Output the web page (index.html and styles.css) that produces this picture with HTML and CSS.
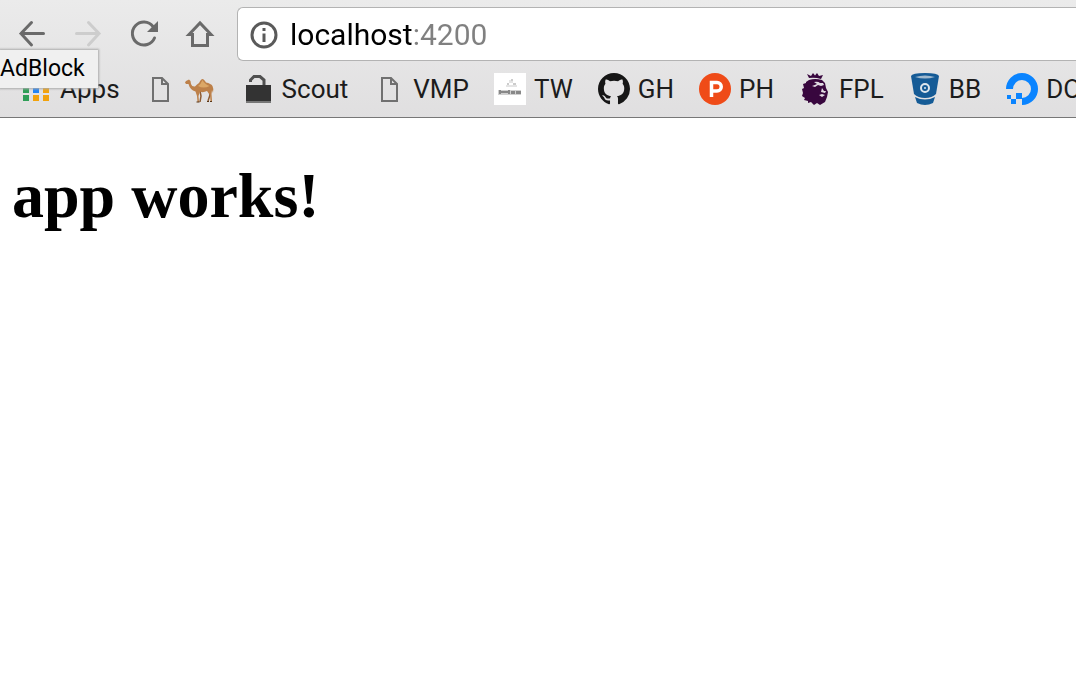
FILE: index.html
```html
<!DOCTYPE html>
<html lang="en">
<head>
<meta charset="utf-8">
<title>localhost:4200</title>
<link rel="stylesheet" href="styles.css">
</head>
<body>
<header class="chrome">
  <div class="toolbar">
    <nav class="controls" aria-label="Navigation">
      <button class="control" type="button" aria-label="Back">
        <svg class="glyph" viewBox="0 0 32 32"><path d="M27.500 15.500H5M15.500 4.500 5 15.500 15.500 27" fill="none" stroke="#6a6a6a" stroke-width="3" stroke-linecap="round"/></svg>
      </button>
      <button class="control" type="button" aria-label="Forward" disabled>
        <svg class="glyph" viewBox="0 0 32 32"><path d="M4.500 15.500H27M16.500 4.500 27 15.500 16.500 27" fill="none" stroke="#cdcdcd" stroke-width="3" stroke-linecap="round"/></svg>
      </button>
      <button class="control" type="button" aria-label="Reload">
        <svg class="glyph" viewBox="0 0 32 32"><path d="M25 8.500A11.500 11.500 0 1 0 26.500 20" fill="none" stroke="#6a6a6a" stroke-width="3" stroke-linecap="round"/><path d="M30 3v11H19z" fill="#6a6a6a"/></svg>
      </button>
      <button class="control" type="button" aria-label="Home">
        <svg class="glyph" viewBox="0 0 32 32"><path d="M5 16.500 16 5l11 11.500h-3.500v11h-15v-11z" fill="none" stroke="#6a6a6a" stroke-width="3"/></svg>
      </button>
    </nav>
    <div class="address">
      <svg class="info" viewBox="0 0 28 28"><circle cx="14" cy="14" r="12" fill="none" stroke="#5a5a5a" stroke-width="3"/><path d="M12.500 7h3v3h-3zM12.500 12.500h3V21h-3z" fill="#5a5a5a"/></svg>
      <input class="url" type="text" value="localhost:4200" aria-label="Address" spellcheck="false">
    </div>
  </div>
  <nav class="bookmarks" aria-label="Bookmarks">
    <a class="bookmark" href="#apps">
      <svg class="icon" viewBox="0 0 32 32"><path d="M3 14h6v6H3zM3 22h6v6H3z" fill="#2f9e57"/><path d="M13 14h6v6h-6z" fill="#2383f3"/><path d="M23 14h6v6h-6zM13 22h6v6h-6zM23 22h6v6h-6z" fill="#f2a20c"/></svg>
      <span>Apps</span>
    </a>
    <a class="bookmark" href="#camel" aria-label="Camel">
      <svg class="icon" viewBox="0 0 32 32"><path d="M8 5h9l6 6v17H8zM17 5v6h6" fill="none" stroke="#707070" stroke-width="2"/></svg>
      <svg class="icon" viewBox="0 0 32 32">
        <path d="M15 18l1 5-1 6M24 17l1 5-2 6" fill="none" stroke="#8f5b31" stroke-width="1.500"/>
        <path d="M0 9.500 1 8l3-1.500L5.500 8 6 11q1 3 4 2.500Q12 11 14 10q2-4 3.500-4T21 9.500q5 1 6.500 3.500 1.500 3 .5 7l-1-3-.5 4 .5 7h-1.500L25 22l-3-4q-4 2-7 .5L13.500 23l.5 6h-1.500L12 23l-1.500-4.500Q5 17 3.500 11L1 11Z" fill="#bd8049"/>
        <path d="M13 13q3-2 4.500-6 2 4 7 6-6 3-11.500 0z" fill="#dba767"/>
        <path d="M11.500 28.500h3v1h-3zM22 28h2v1h-2zM25 28h2v1h-2z" fill="#593718"/>
      </svg>
    </a>
    <a class="bookmark" href="#scout">
      <svg class="icon" viewBox="0 0 32 32"><path d="M8.500 9V7L12 3.500h6L22 7v6" fill="none" stroke="#505050" stroke-width="3"/><path d="M4 12h25v16H4z" fill="#333"/><path d="M4 28h25v2H4z" fill="#777"/></svg>
      <span>Scout</span>
    </a>
    <a class="bookmark" href="#vmp">
      <svg class="icon" viewBox="0 0 32 32"><path d="M9 5h9l6 6v17H9zM18 5v6h6" fill="none" stroke="#707070" stroke-width="2"/></svg>
      <span>VMP</span>
    </a>
    <a class="bookmark" href="#tw">
      <svg class="icon" viewBox="0 0 32 32"><path d="M0 0h32v32H0z" fill="#fff"/><path d="M15 7h4v3h-4zM12 12h11v2H12z" fill="#e4e4e4"/><path d="M17 6h2v2h-2zM19 10h3v2h-3zM13 10h2v2h-2z" fill="#ccc"/><path d="M4 17h23v5H4z" fill="#d0d0d0"/><path d="M5 17h2v4H5zM7 18h7v2H7zM14 17h2v4h-2zM17 18h4v3h-4zM22 18h5v3h-5z" fill="#888"/></svg>
      <span>TW</span>
    </a>
    <a class="bookmark" href="#gh">
      <svg class="icon" viewBox="0 0 16 16"><path fill="#161616" d="M8 0C3.580 0 0 3.580 0 8c0 3.540 2.290 6.530 5.470 7.590.4.070.55-.17.55-.38 0-.19-.01-.82-.01-1.490-2.010.37-2.530-.49-2.690-.94-.09-.23-.48-.94-.82-1.130-.28-.15-.68-.52-.01-.53.63-.01 1.080.58 1.230.82.72 1.210 1.870.87 2.330.66.07-.52.28-.87.51-1.070-1.780-.2-3.640-.89-3.640-3.950 0-.87.31-1.590.82-2.150-.08-.2-.36-1.020.08-2.120 0 0 .67-.21 2.200.82.64-.18 1.320-.27 2-.27s1.360.09 2 .27c1.530-1.040 2.200-.82 2.200-.82.44 1.100.16 1.920.08 2.120.51.56.82 1.270.82 2.150 0 3.070-1.870 3.750-3.650 3.950.29.25.54.73.54 1.480 0 1.070-.01 1.930-.01 2.200 0 .21.15.46.55.38A8.010 8.010 0 0 0 16 8c0-4.420-3.580-8-8-8z"/></svg>
      <span>GH</span>
    </a>
    <a class="bookmark" href="#ph">
      <svg class="icon" viewBox="0 0 32 32"><circle cx="16" cy="16" r="16" fill="#ef4b18"/><path d="M12.500 24V9.500H18a4 4 0 0 1 0 8.500h-5" fill="none" stroke="#fff" stroke-width="3.500"/></svg>
      <span>PH</span>
    </a>
    <a class="bookmark" href="#fpl">
      <svg class="icon" viewBox="0 0 32 32"><path d="M10 5 8 1l4 2 2-3 2 2.500L18 0l2 3 4-1-2 4q-6-2-12-1z" fill="#38073e"/><path d="M10 7q6-2 13 0l3 3 1 5 2 4-1 5-2 5-5 3-3-2-3 2-3-3-3 1v-2l-4-1 1-2-3-2 1-3-1-4 2-1-1-4 3-1V9z" fill="#38073e"/><path d="M15 9q4-1 6 1l3 0 1 2-3 1-3-1-3 2-3-1q3-1 5-2zM23 15l2 3 2 0-1 2-4-1zM20 22l3-1 3 1-3 2z" fill="#e1dce3"/></svg>
      <span>FPL</span>
    </a>
    <a class="bookmark" href="#bb">
      <svg class="icon" viewBox="0 0 32 32"><path d="M2 3Q3 0 16 0t14 3l-3 18q-4 4-11 4T5 21z" fill="#155b96"/><path d="M6 4q10-3 20 0-10 3-20 0z" fill="#9fb9cf"/><path d="M6 24q10 5 20 0l-2 6q-8 4-16 0z" fill="#155b96"/><circle cx="16" cy="15" r="4" fill="none" stroke="#dde6ed" stroke-width="2"/><circle cx="16" cy="15" r="1" fill="#dde6ed"/></svg>
      <span>BB</span>
    </a>
    <a class="bookmark" href="#do">
      <svg class="icon" viewBox="0 0 32 32"><path d="M3.500 16A12.500 12.500 0 1 1 16 28.500" fill="none" stroke="#0a84ff" stroke-width="7"/><path d="M10 20h6v6h-6zM5 26h5v5H5zM1 22h4v4H1z" fill="#0a84ff"/></svg>
      <span>DO</span>
    </a>
  </nav>
  <div class="tooltip" role="tooltip">AdBlock</div>
</header>
<main class="page">
  <h1 class="title">app works!</h1>
</main>
</body>
</html>
```
FILE: styles.css
```css
* {
  box-sizing: border-box;
}

body {
  margin: 0;
  background: #fff;
  color: #000;
  font-family: "Liberation Serif", serif;
}

.chrome {
  position: relative;
  overflow: hidden;
  padding-top: 7px;
  border-bottom: 1px solid #777;
  background: linear-gradient(#ebebeb, #e0dfe0);
  font-family: Roboto, sans-serif;
}

.toolbar {
  display: flex;
  align-items: center;
  gap: 9px;
  padding-left: 4px;
}

.controls {
  display: flex;
}

.control {
  display: flex;
  justify-content: center;
  width: 56px;
  padding: 0;
  border: 0;
  background: none;
}

.glyph {
  width: 32px;
  height: 32px;
}

.address {
  display: flex;
  flex: 1;
  align-items: center;
  gap: 12px;
  height: 54px;
  padding: 2px 0 0 12px;
  border: 1px solid #b3b3b3;
  border-right: 0;
  border-radius: 6px 0 0 6px;
  background: #fff;
}

.info {
  flex: none;
  width: 28px;
  height: 28px;
}

.url {
  flex: 1;
  min-width: 0;
  padding: 0;
  border: 0;
  outline: 0;
  background: linear-gradient(to right, #000 122px, #808080 122px);
  background-clip: text;
  -webkit-background-clip: text;
  color: #000;
  -webkit-text-fill-color: transparent;
  font: 30px/40px Roboto, sans-serif;
}

.bookmarks {
  display: flex;
  align-items: center;
  gap: 25px;
  height: 56px;
  padding-left: 20px;
}

.bookmark {
  display: flex;
  flex: none;
  align-items: center;
  gap: 8px;
  color: #1c1c1c;
  font-size: 26px;
  line-height: 32px;
  text-decoration: none;
}

.icon {
  flex: none;
  width: 32px;
  height: 32px;
}

.tooltip {
  position: absolute;
  top: 50px;
  left: 0;
  padding: 0 13px 0 0;
  background: #f0f0f0;
  box-shadow: 0 0 2px 1px #aaa;
  font-size: 23px;
  line-height: 38px;
}

.page {
  padding: 46px 12px;
}

.title {
  margin: 0;
  font-size: 64px;
  line-height: 64px;
}
```
